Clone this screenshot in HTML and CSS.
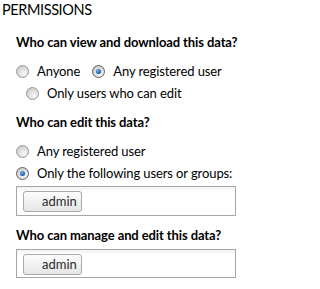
FILE: index.html
```html
<!DOCTYPE html>
<html>
<head>
<meta charset="utf-8">
<link rel="stylesheet" href="styles.css">
</head>
<body>
<div class="page">
  <h2 class="title">PERMISSIONS</h2>
  <div class="content">
    <h3 class="q q-first">Who can view and download this data?</h3>
    <div class="row">
      <label class="opt"><span class="radio"></span>Anyone</label>
      <label class="opt"><span class="radio checked"></span>Any registered user</label>
    </div>
    <div class="row row-next indent">
      <label class="opt"><span class="radio"></span>Only users who can edit</label>
    </div>

    <h3 class="q">Who can edit this data?</h3>
    <div class="row">
      <label class="opt"><span class="radio"></span>Any registered user</label>
    </div>
    <div class="row row-next">
      <label class="opt"><span class="radio checked"></span>Only the following users or groups:</label>
    </div>
    <div class="box box-first"><span class="tag">admin</span></div>

    <h3 class="q">Who can manage and edit this data?</h3>
    <div class="box box-second"><span class="tag">admin</span></div>
  </div>
</div>
</body>
</html>
```

FILE: styles.css
```css
html, body {
  margin: 0;
  padding: 0;
  background: #fff;
}
body {
  font-family: Lato, "Open Sans", sans-serif;
  color: #000;
}
.page {
  display: flex;
  flex-direction: column;
}
.title {
  margin: 0;
  padding-left: 2px;
  font-size: 14.5px;
  font-weight: 400;
  line-height: 19px;
  letter-spacing: -0.4px;
}
.content {
  display: flex;
  flex-direction: column;
  padding-left: 16px;
}
.q {
  margin: 0;
  margin-top: 10px;
  font-size: 13px;
  font-weight: 700;
  line-height: 18px;
  letter-spacing: -0.1px;
}
.q-first {
  margin-top: 14px;
}
.row {
  display: flex;
  align-items: center;
  gap: 12px;
  height: 20px;
  margin-top: 10px;
  font-size: 13px;
  line-height: 20px;
  letter-spacing: -0.1px;
}
.row-next {
  margin-top: 2px;
}
.indent {
  padding-left: 10px;
}
.opt {
  display: flex;
  align-items: center;
  gap: 8px;
}
.radio {
  width: 13px;
  height: 13px;
  box-sizing: border-box;
  border-radius: 50%;
  border: 1px solid #979797;
  background: radial-gradient(circle at 65% 70%, #f8f8f8 0%, #e0e0e0 45%, #bdbdbd 100%);
  position: relative;
  margin-top: 1px;
  flex: none;
}
.radio.checked {
  border-color: #5f5f5f;
}
.radio.checked::after {
  content: "";
  position: absolute;
  left: 3px;
  top: 3px;
  width: 5px;
  height: 5px;
  border-radius: 50%;
  background: radial-gradient(circle at 40% 35%, #74b5ea 0%, #1d6bb0 55%, #0c3f73 100%);
}
.box {
  width: 220px;
  height: 30px;
  box-sizing: border-box;
  border: 1px solid #a6a6a6;
  background: linear-gradient(#f1f1f1, #fff 5px);
  display: flex;
  align-items: flex-start;
  padding: 4px 0 0 6px;
}
.box-first {
  margin-top: 3px;
}
.box-second {
  margin-top: 5px;
  height: 29px;
}
.tag {
  box-sizing: border-box;
  width: 59px;
  height: 21px;
  padding-left: 18px;
  border: 1px solid #aaa;
  border-radius: 3px;
  background: linear-gradient(#fdfdfd, #e6e6e6);
  font-size: 13px;
  line-height: 19px;
  color: #2a2a2a;
}
```
